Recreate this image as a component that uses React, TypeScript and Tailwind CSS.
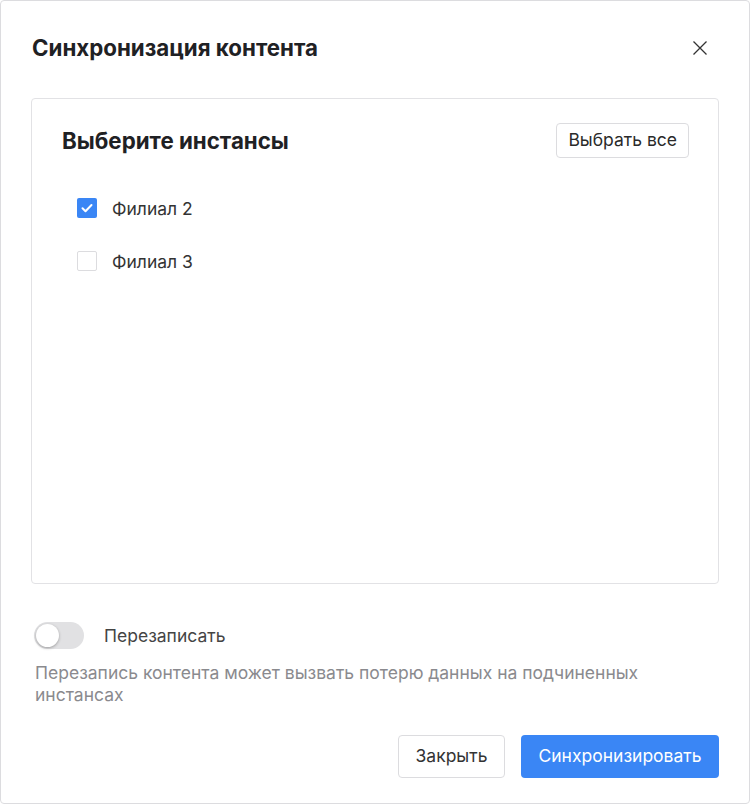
import { useState } from "react";

export default function App() {
    const [items, setItems] = useState([
        { id: 2, label: "Филиал 2", checked: true },
        { id: 3, label: "Филиал 3", checked: false },
    ]);
    const [overwrite, setOverwrite] = useState(false);

    const toggle = (id: number) =>
        setItems(items.map((i) => (i.id === id ? { ...i, checked: !i.checked } : i)));

    return (
        <div
            className="w-[750px] h-[804px] bg-white text-[#222] flex flex-col border border-[#dcdcdf] rounded-[4px]"
            style={{ fontFamily: "Inter, 'Noto Sans', sans-serif" }}
        >
            {/* Header */}
            <div className="flex items-center justify-between pl-[31px] pr-[42px] h-[94px]">
                <h1 className="text-[22.3px] font-bold text-[#1f2124]">Синхронизация контента</h1>
                <button className="w-[14px] h-[14px] flex items-center justify-center text-[#333]">
                    <svg width="14" height="14" viewBox="0 0 14 14" fill="none" stroke="currentColor" strokeWidth="1.3">
                        <path d="M0.5 0.5l13 13M13.5 0.5l-13 13" />
                    </svg>
                </button>
            </div>

            {/* Instances panel */}
            <div className="mx-[30px] mt-[3px] h-[486px] border border-[#e2e2e5] rounded-[4px] pl-[30px] pr-[29px] pt-[24px]">
                <div className="flex items-center justify-between">
                    <h2 className="text-[22.3px] font-bold text-[#1f2124]">Выберите инстансы</h2>
                    <button className="h-[35px] px-[11px] border border-[#dcdcdf] rounded-[4px] text-[17.5px] text-[#2a2a2a] bg-white">
                        Выбрать все
                    </button>
                </div>
                <div className="flex flex-col gap-[33px] mt-[40px] pl-[15px]">
                    {items.map((item) => (
                        <label key={item.id} className="flex items-center gap-[15px] cursor-pointer h-[20px]">
                            <span
                                onClick={() => toggle(item.id)}
                                className={
                                    item.checked
                                        ? "w-[20px] h-[20px] rounded-[2px] bg-[#3a86f5] flex items-center justify-center"
                                        : "w-[20px] h-[20px] rounded-[2px] border border-[#dcdcdf] bg-white"
                                }
                            >
                                {item.checked && (
                                    <svg width="12" height="10" viewBox="0 0 12 10" fill="none" stroke="white" strokeWidth="2" strokeLinecap="round" strokeLinejoin="round">
                                        <path d="M1.5 5.2l3 3 6-6.2" />
                                    </svg>
                                )}
                            </span>
                            <span className="text-[17.5px] text-[#333] pt-[2px]">{item.label}</span>
                        </label>
                    ))}
                </div>
            </div>

            {/* Overwrite */}
            <div className="px-[33px] mt-[37px]">
                <div className="flex items-center gap-[20px]">
                    <button
                        onClick={() => setOverwrite(!overwrite)}
                        className={
                            overwrite
                                ? "w-[50px] h-[27px] rounded-full bg-[#3a86f5] p-[2px] flex justify-end"
                                : "w-[50px] h-[27px] rounded-full bg-[#e1e1e3] p-[2px] flex justify-start"
                        }
                    >
                        <span className="w-[23px] h-[23px] rounded-full bg-white shadow-[0_1px_3px_rgba(0,0,0,0.3)]" />
                    </button>
                    <span className="text-[17.5px] text-[#444] pt-[2px]">Перезаписать</span>
                </div>
                <p className="mt-[13px] pl-[1px] text-[17.5px] leading-[22px] text-[#8a8a8e] max-w-[640px]">
                    Перезапись контента может вызвать потерю данных на подчиненных инстансах
                </p>
            </div>

            {/* Footer */}
            <div className="flex justify-end gap-[16px] pr-[30px] mt-auto mb-[25px]">
                <button className="h-[43px] w-[107px] border border-[#dcdcdf] rounded-[4px] text-[17.5px] text-[#333] bg-white">
                    Закрыть
                </button>
                <button className="h-[43px] w-[198px] rounded-[4px] text-[17.5px] text-white bg-[#3a86f5]">
                    Синхронизировать
                </button>
            </div>
        </div>
    );
}
